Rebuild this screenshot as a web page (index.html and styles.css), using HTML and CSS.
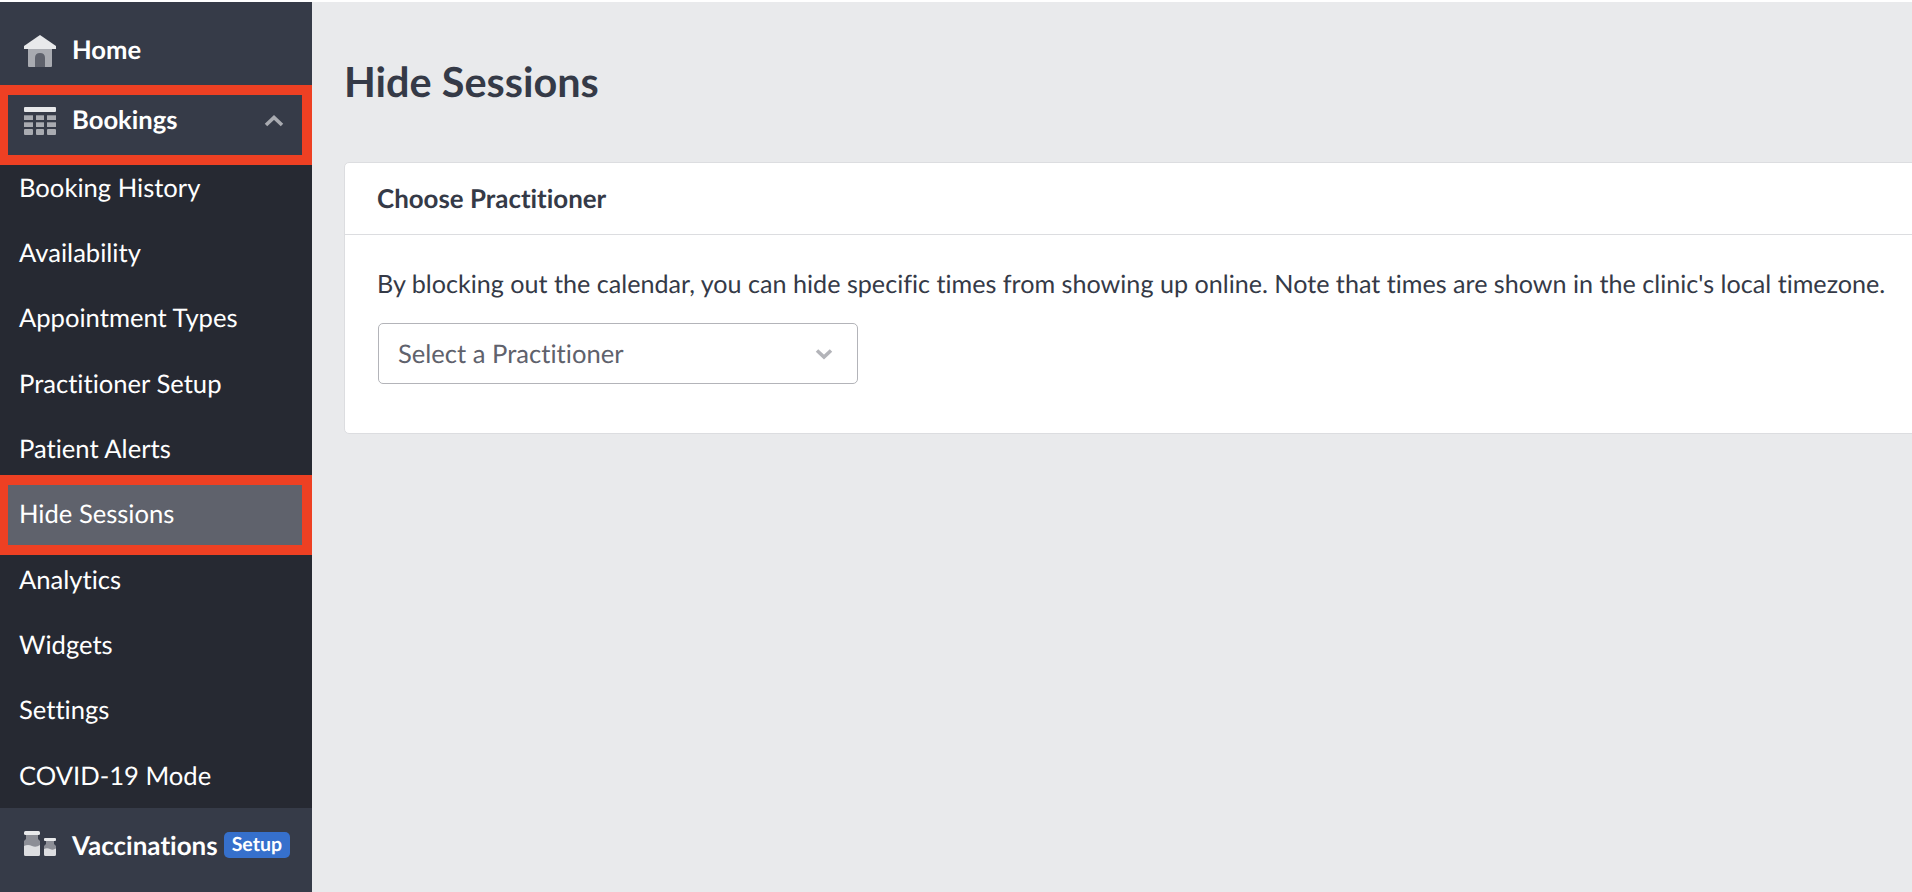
FILE: index.html
```html
<!DOCTYPE html>
<html lang="en">
<head>
    <meta charset="UTF-8">
    <title>Hide Sessions</title>
    <link rel="stylesheet" href="styles.css">
</head>
<body>
    <div class="sidebar">
        <a class="nav-main nav-home">
            <svg class="nav-icon" viewBox="0 0 32 32">
                <path fill="#e8e9eb" d="M16 0 L32 11 V14 H0 V11 Z"/>
                <path fill="#a9abb1" d="M4 14 H28 V31 Q28 32 27 32 H5 Q4 32 4 31 Z"/>
                <path fill="#5f626c" d="M11 32 V23 Q11 18 16 18 Q21 18 21 23 V32 Z"/>
            </svg>
            <span>Home</span>
        </a>
        <a class="nav-main nav-bookings">
            <svg class="nav-icon" viewBox="0 0 32 28">
                <rect fill="#e8e9eb" width="32" height="5" y="0" rx="1"/>
                <g fill="#a9abb1">
                    <rect x="0" y="8.3" width="9" height="4.7"/>
                    <rect x="12" y="8.3" width="8" height="4.7"/>
                    <rect x="23" y="8.3" width="9" height="4.7"/>
                    <rect x="0" y="15.3" width="9" height="4.7"/>
                    <rect x="12" y="15.3" width="8" height="4.7"/>
                    <rect x="23" y="15.3" width="9" height="4.7"/>
                    <rect x="0" y="22" width="9" height="6" rx="1"/>
                    <rect x="12" y="22" width="8" height="6" rx="1"/>
                    <rect x="23" y="22" width="9" height="6" rx="1"/>
                </g>
            </svg>
            <span>Bookings</span>
            <svg class="nav-chevron" viewBox="0 0 20 14">
                <path d="M2 11 L10 3.5 L18 11" fill="none" stroke="#a9abb1" stroke-width="3.6"/>
            </svg>
        </a>
        <div class="sub-list">
            <a class="sub-item">Booking History</a>
            <a class="sub-item">Availability</a>
            <a class="sub-item">Appointment Types</a>
            <a class="sub-item">Practitioner Setup</a>
            <a class="sub-item">Patient Alerts</a>
            <a class="sub-item active">Hide Sessions</a>
            <a class="sub-item">Analytics</a>
            <a class="sub-item">Widgets</a>
            <a class="sub-item">Settings</a>
            <a class="sub-item">COVID-19 Mode</a>
        </div>
        <a class="nav-main nav-vacc">
            <svg class="nav-icon" viewBox="0 0 32 25">
                <path fill="#8c8e96" d="M2 4 H14 V8 L16 10 V16 H0 V10 L2 8 Z"/>
                <path fill="#dcdde0" d="M0 15 Q4 13 8 15 T16 14 V23.5 Q16 25 14.5 25 H1.5 Q0 25 0 23.5 Z"/>
                <rect fill="#e8e9eb" x="0" y="0" width="16" height="4" rx="1.5"/>
                <path fill="#8c8e96" d="M22 10 H30 V13 L32 15 V20 H20 V15 L22 13 Z"/>
                <path fill="#dcdde0" d="M20 18 Q23 16.5 26 18 T32 17.5 V23.5 Q32 25 30.5 25 H21.5 Q20 25 20 23.5 Z"/>
                <rect fill="#e8e9eb" x="20" y="7" width="12" height="3" rx="1"/>
            </svg>
            <span>Vaccinations</span>
            <span class="badge">Setup</span>
        </a>
        <div class="mark mark-bookings"></div>
        <div class="mark mark-hide"></div>
    </div>

    <div class="main">
        <h1>Hide Sessions</h1>
        <div class="card">
            <div class="card-head">Choose Practitioner</div>
            <div class="card-body">
                <p>By blocking out the calendar, you can hide specific times from showing up online. Note that times are shown in the clinic's local timezone.</p>
                <div class="select">
                    <span>Select a Practitioner</span>
                    <svg class="select-arrow" viewBox="0 0 18 12">
                        <path d="M2 2.5 L9 9 L16 2.5" fill="none" stroke="#b3b4b9" stroke-width="3.6"/>
                    </svg>
                </div>
            </div>
        </div>
    </div>
</body>
</html>
```

FILE: styles.css
```css
html, body {
    height: 100%;
}

body {
    margin: 0;
    box-sizing: border-box;
    padding-top: 2px;
    display: flex;
    overflow: hidden;
    font-family: Lato, "Open Sans", sans-serif;
    font-variant-ligatures: none;
    text-rendering: geometricPrecision;
    background: #fff;
    color: #353a47;
}

/* Sidebar */
.sidebar {
    position: relative;
    flex: 0 0 312px;
    background: #363b48;
    color: #fff;
}

.nav-main {
    display: flex;
    align-items: center;
    height: 70px;
    padding-left: 24px;
    font-size: 25.6px;
    font-weight: 700;
    line-height: 1;
}

.nav-home {
    height: 69px;
    padding-top: 14px;
}

.nav-icon {
    flex: 0 0 32px;
    width: 32px;
    margin-right: 16px;
}

.nav-bookings {
    height: 69px;
    padding-top: 1px;
}

.nav-vacc {
    height: 70px;
    padding-top: 2px;
    font-size: 26px;
}

.nav-vacc .nav-icon {
    margin-top: -3px;
}

.nav-chevron {
    width: 20px;
    margin-left: auto;
    margin-right: 28px;
}

.badge {
    margin-left: 6px;
    padding: 0 8px;
    height: 26px;
    line-height: 26px;
    border-radius: 5px;
    background: #3670cc;
    font-size: 19.5px;
}

.sub-list {
    height: 653px;
    background: #262932;
}

.sub-item {
    display: flex;
    align-items: center;
    box-sizing: border-box;
    height: 65.35px;
    padding-left: 19px;
    font-size: 25.6px;
    color: #fff;
}

.sub-item.active {
    background: #5f626c;
}

/* Red annotation boxes drawn over the screenshot */
.mark {
    position: absolute;
    left: 0;
    width: 312px;
    height: 80px;
    box-sizing: border-box;
    border: 10px solid #ee4023;
    border-left-width: 8px;
}

.mark-bookings {
    top: 83px;
}

.mark-hide {
    top: 473px;
}

/* Content */
.main {
    flex: 1;
    min-width: 0;
    padding-left: 32px;
    background: #e9eaec;
}

h1 {
    margin: 0;
    padding-top: 54px;
    font-size: 41.4px;
    font-weight: 700;
    line-height: 50px;
}

.card {
    margin-top: 56px;
    margin-right: -60px;
    background: #fff;
    border: 1px solid #dcdde0;
    border-radius: 5px;
}

.card-head {
    padding: 0 32px;
    height: 71px;
    line-height: 71px;
    font-size: 25.9px;
    font-weight: 700;
    border-bottom: 1px solid #dcdde0;
}

.card-body {
    padding: 32px;
    height: 134px;
}

.card-body p {
    margin: 0;
    font-size: 25.15px;
    line-height: 35px;
}

.select {
    display: flex;
    align-items: center;
    justify-content: space-between;
    box-sizing: border-box;
    width: 480px;
    height: 61px;
    margin-top: 21px;
    margin-left: 1px;
    padding: 0 24px 0 19px;
    border: 1px solid #b3b4b9;
    border-radius: 5px;
    font-size: 25.6px;
    color: #5f626c;
}

.select-arrow {
    width: 18px;
}
```
